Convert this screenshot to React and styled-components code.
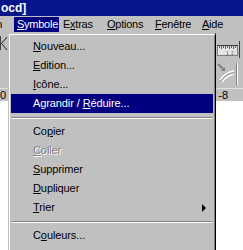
import styled, { createGlobalStyle } from "styled-components"

const GlobalStyle = createGlobalStyle`
  html, body {
    margin: 0;
    padding: 0;
    background: #ffffff;
  }
  body {
    font-family: "Liberation Sans", Arial, sans-serif;
    font-size: 11px;
  }
`

const Screen = styled.div`
  position: relative;
  width: 243px;
  height: 250px;
  overflow: hidden;
  display: flex;
  flex-direction: column;
  background: #ffffff;
`

const TitleBar = styled.div`
  height: 16px;
  flex: none;
  background: #06168a;
  color: #ffffff;
  font-weight: bold;
  font-size: 12px;
  line-height: 16px;
  padding-left: 1px;
  white-space: nowrap;
`

const MenuBar = styled.div`
  height: 17px;
  flex: none;
  background: #c0c0c0;
  display: flex;
  align-items: center;
  white-space: nowrap;
  letter-spacing: -0.25px;
`

const BarItem = styled.div`
  flex: none;
  box-sizing: border-box;
  width: ${(p) => p.$w}px;
  margin-left: ${(p) => p.$shift || 0}px;
  height: 15px;
  line-height: 15px;
  padding-left: 3px;
  color: ${(p) => (p.$active ? "#ffffff" : "#000000")};
  background: ${(p) => (p.$active ? "#000080" : "transparent")};
`

const Toolbar = styled.div`
  height: 55px;
  flex: none;
  background: #c0c0c0;
  display: flex;
  justify-content: space-between;
`

const LeftTools = styled.div`
  padding-top: 3px;
`

const RightTools = styled.div`
  width: 27px;
  display: flex;
  flex-direction: column;
`

const ToolRow = styled.div`
  height: ${(p) => p.$h}px;
  display: flex;
  align-items: ${(p) => (p.$bottom ? "flex-end" : "center")};
`

const Ruler = styled.div`
  height: 12px;
  flex: none;
  background: #c0c0c0;
  border-top: 1px solid #dfdfdf;
  display: flex;
  justify-content: space-between;
  align-items: center;
  padding-right: 15px;
  line-height: 12px;
  color: #000000;
`

const Canvas = styled.div`
  flex: 1;
  background: #ffffff;
`

const Menu = styled.div`
  position: absolute;
  left: 8px;
  top: 33px;
  width: 208px;
  box-sizing: border-box;
  background: #c0c0c0;
  border-style: solid;
  border-width: 1px;
  border-color: #c0c0c0 #000000 #000000 #c0c0c0;
  box-shadow: inset 1px 1px 0 #ffffff, inset -1px -1px 0 #808080;
  padding: 3px 2px 0 2px;
  letter-spacing: -0.1px;
`

const Item = styled.div`
  position: relative;
  height: 19px;
  line-height: 19px;
  padding-left: 22px;
  white-space: nowrap;
  color: ${(p) => (p.$disabled ? "#808080" : p.$active ? "#ffffff" : "#000000")};
  background: ${(p) => (p.$active ? "#000080" : "transparent")};
  text-shadow: ${(p) => (p.$disabled ? "1px 1px 0 #ffffff" : "none")};
`

const Separator = styled.div`
  height: 9px;
  display: flex;
  align-items: center;
  padding: 0 1px;

  &::before {
    content: "";
    flex: 1;
    height: 1px;
    background: #808080;
    border-bottom: 1px solid #ffffff;
  }
`

const Arrow = styled.span`
  position: absolute;
  right: 7px;
  top: 6px;
  width: 0;
  height: 0;
  border-top: 4px solid transparent;
  border-bottom: 4px solid transparent;
  border-left: 4px solid #000000;
`

const RulerIcon = () => (
  <svg width="24" height="17" viewBox="0 0 24 17">
    <rect x="1.5" y="4.5" width="20" height="10" fill="#e4e4e4" stroke="#808080" />
    <path d="M1 4.5h21" stroke="#404040" />
    {[3, 5, 7, 9, 11, 13, 15, 17, 19].map((x) => (
      <path key={x} d={`M${x}.5 5v${x % 4 === 1 ? 3 : 2}`} stroke="#606060" />
    ))}
    <text x="10" y="13.5" fontSize="5" fontFamily="Liberation Sans" fill="#606060">1</text>
    <text x="15" y="13.5" fontSize="5" fontFamily="Liberation Sans" fill="#606060">2</text>
    <path d="M23.5 0v17" stroke="#404040" />
  </svg>
)

const JoinIcon = () => (
  <svg width="24" height="24" viewBox="0 0 24 24">
    <path d="M2 3l6 6" stroke="#808080" strokeWidth="2" />
    <path d="M5 10l4 0l0-4z" fill="#808080" />
    <path d="M4 19c4-5 7-8 14-9" stroke="#ffffff" strokeWidth="1.5" fill="none" />
    <path d="M6 21c4-5 7-7 12-8" stroke="#ffffff" strokeWidth="1.5" fill="none" />
    <path d="M4.5 20.5c4-5 7-8 13.5-8.5" stroke="#909090" strokeWidth="1" fill="none" />
    <path d="M20.5 2v22" stroke="#808080" />
    <path d="M21.5 2v22" stroke="#ffffff" />
  </svg>
)

const CutIcon = () => (
  <svg width="8" height="16" viewBox="0 0 8 16">
    <path d="M0.5 0v14" stroke="#404040" />
    <path d="M7 1L1.5 7.5L7 14" stroke="#202020" fill="none" />
  </svg>
)

const U = styled.u`
  text-decoration: underline;
  text-underline-offset: 1px;
`

export default function App() {
  return (
    <>
      <GlobalStyle />
      <Screen>
        <TitleBar>ocd]</TitleBar>
        <MenuBar>
          <BarItem $w={47} $shift={-33}>
            Dessin
          </BarItem>
          <BarItem $w={45} $active>
            <U>S</U>ymbole
          </BarItem>
          <BarItem $w={44} $shift={1}>
            E<U>x</U>tras
          </BarItem>
          <BarItem $w={48}>
            <U>O</U>ptions
          </BarItem>
          <BarItem $w={47}>
            <U>F</U>enêtre
          </BarItem>
          <BarItem $w={40}>
            <U>A</U>ide
          </BarItem>
        </MenuBar>
        <Toolbar>
          <LeftTools>
            <CutIcon />
          </LeftTools>
          <RightTools>
            <ToolRow $h={25} $bottom>
              <RulerIcon />
            </ToolRow>
            <ToolRow $h={30}>
              <JoinIcon />
            </ToolRow>
          </RightTools>
        </Toolbar>
        <Ruler>
          <span>0</span>
          <span>-8</span>
        </Ruler>
        <Canvas />
        <Menu>
          <Item>
            <U>N</U>ouveau...
          </Item>
          <Item>
            <U>E</U>dition...
          </Item>
          <Item>
            <U>I</U>cône...
          </Item>
          <Item $active>
            Agrandir / <U>R</U>éduire...
          </Item>
          <Separator />
          <Item>
            Co<U>p</U>ier
          </Item>
          <Item $disabled>
            <U>C</U>oller
          </Item>
          <Item>
            <U>S</U>upprimer
          </Item>
          <Item>
            <U>D</U>upliquer
          </Item>
          <Item>
            <U>T</U>rier
            <Arrow />
          </Item>
          <Separator />
          <Item>
            C<U>o</U>uleurs...
          </Item>
          <Item>Changer la couleur de fond...</Item>
        </Menu>
      </Screen>
    </>
  )
}
